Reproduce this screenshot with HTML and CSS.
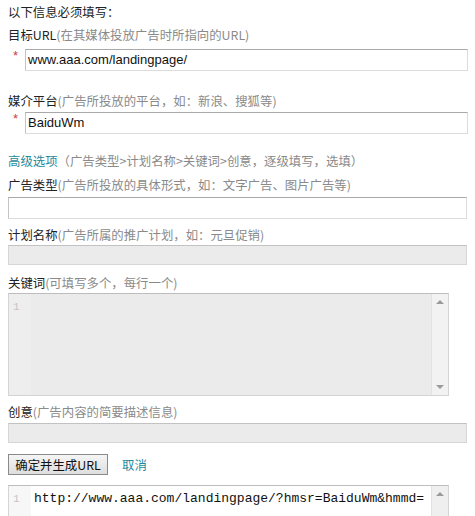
FILE: index.html
```html
<!DOCTYPE html>
<html lang="zh-CN">
<head>
    <meta charset="UTF-8">
    <title>URL生成</title>
    <link rel="stylesheet" href="styles.css">
</head>
<body>
    <div class="form">
        <div class="title">以下信息必须填写：</div>

        <div class="label l-url">目标URL<span class="hint">(在其媒体投放广告时所指向的URL)</span></div>
        <div class="req-row r-url">
            <span class="star">*</span>
            <div class="input">www.aaa.com/landingpage/</div>
        </div>

        <div class="label l-media">媒介平台<span class="hint">(广告所投放的平台，如：新浪、搜狐等)</span></div>
        <div class="req-row r-media">
            <span class="star">*</span>
            <div class="input">BaiduWm</div>
        </div>

        <div class="label l-adv"><span class="link">高级选项</span><span class="hint">（广告类型&gt;计划名称&gt;关键词&gt;创意，逐级填写，选填）</span></div>

        <div class="label l-type">广告类型<span class="hint">(广告所投放的具体形式，如：文字广告、图片广告等)</span></div>
        <div class="input full i-type"></div>

        <div class="label l-plan">计划名称<span class="hint">(广告所属的推广计划，如：元旦促销)</span></div>
        <div class="input full disabled"></div>

        <div class="label l-kw">关键词<span class="hint">(可填写多个，每行一个)</span></div>
        <div class="editor disabled-ed kw">
            <div class="gutter">1</div>
            <div class="code"></div>
            <div class="scroll">
                <span class="arrow up"></span>
                <span class="arrow down"></span>
            </div>
        </div>

        <div class="label l-idea">创意<span class="hint">(广告内容的简要描述信息)</span></div>
        <div class="input full disabled i-idea"></div>

        <div class="actions">
            <button class="btn">确定并生成URL</button>
            <a class="link cancel" href="#">取消</a>
        </div>

        <div class="editor result">
            <div class="gutter">1</div>
            <div class="code">http://www.aaa.com/landingpage/?hmsr=BaiduWm&amp;hmmd=</div>
            <div class="scroll">
                <span class="arrow up"></span>
            </div>
        </div>
    </div>
</body>
</html>
```

FILE: styles.css
```css
body {
    margin: 0;
    padding: 0;
    background: #fff;
    color: #333;
    font-family: "Noto Sans CJK SC", "Liberation Sans", sans-serif;
    font-size: 12.4px;
    overflow: hidden;
}

.form {
    padding: 0 0 0 8px;
    width: 460px;
}

.title {
    margin-top: 2px;
    line-height: 20px;
    color: #222;
}

.label {
    line-height: 20px;
    color: #222;
    white-space: nowrap;
}
.hint {
    color: #8a8a8a;
}
.link {
    color: #1f8a9c;
    text-decoration: none;
}

.l-url { margin-top: 3px; }
.r-url { margin-top: 4px; }
.l-media { margin-top: 20px; }
.r-media { margin-top: 1px; }
.l-adv { margin-top: 17px; }
.l-type { margin-top: 4px; }
.i-type { margin-top: 2px; }
.l-plan { margin-top: 6px; }
.l-kw { margin-top: 8px; }
.l-idea { margin-top: 6px; }
.i-idea { margin-top: 1px; }

.req-row {
    display: flex;
    align-items: flex-start;
}
.star {
    width: 17px;
    color: #d04040;
    font-family: "Liberation Sans", sans-serif;
    font-size: 13px;
    line-height: 14px;
    padding-left: 5px;
    box-sizing: border-box;
}

.input {
    box-sizing: border-box;
    width: 443px;
    height: 22px;
    border: 1px solid #dcdcdc;
    border-top-color: #a9a9a9;
    border-left-color: #c4c4c4;
    background: #fff;
    font-family: "Liberation Sans", sans-serif;
    font-size: 13px;
    line-height: 20px;
    padding-left: 2px;
    color: #111;
}
.input.full {
    width: 459px;
}
.input.disabled {
    height: 20px;
    background: #ebebeb;
    border-color: #d6d6d6;
    border-top-color: #c2c2c2;
}

.editor {
    box-sizing: border-box;
    width: 441px;
    display: flex;
    border: 1px solid #d4d4d4;
    border-top-color: #bdbdbd;
}
.editor .gutter {
    width: 22px;
    padding: 6px 0 0 4px;
    box-sizing: border-box;
    font-family: "Liberation Mono", monospace;
    font-size: 11px;
    line-height: 14px;
    color: #c4c4c4;
    background: #f3f3f3;
}
.editor .code {
    flex: 1;
    font-family: "Liberation Mono", monospace;
    font-size: 13px;
    line-height: 15px;
    padding: 5px 0 0 3px;
    color: #111;
    white-space: nowrap;
    overflow: hidden;
}
.editor .scroll {
    width: 16px;
    position: relative;
    border-left: 1px solid #e2e2e2;
    background: #f2f2f2;
}
.arrow {
    position: absolute;
    left: 4px;
    width: 0;
    height: 0;
    border-left: 4px solid transparent;
    border-right: 4px solid transparent;
}
.arrow.up {
    top: 6px;
    border-bottom: 4px solid #9a9a9a;
}
.arrow.down {
    bottom: 6px;
    border-top: 4px solid #9a9a9a;
}

.kw {
    height: 103px;
}
.disabled-ed .code {
    background: #ebebeb;
}
.disabled-ed .gutter {
    background: #eeeeee;
}

.actions {
    margin-top: 11px;
    display: flex;
    align-items: center;
}
.btn {
    box-sizing: border-box;
    width: 100px;
    height: 21px;
    padding: 0;
    font-family: "Noto Sans CJK SC", "Liberation Sans", sans-serif;
    font-size: 12.4px;
    line-height: 18px;
    color: #111;
    border: 1px solid #8a8a8a;
    border-radius: 0;
    background: linear-gradient(#f5f5f5, #dedede);
}
.cancel {
    margin-left: 14px;
}

.result {
    margin-top: 10px;
    height: 40px;
}
.result .gutter {
    background: #f7f7f7;
}
.result .code {
    padding-top: 5px;
}
.result .scroll {
    background: #efefef;
}
```
